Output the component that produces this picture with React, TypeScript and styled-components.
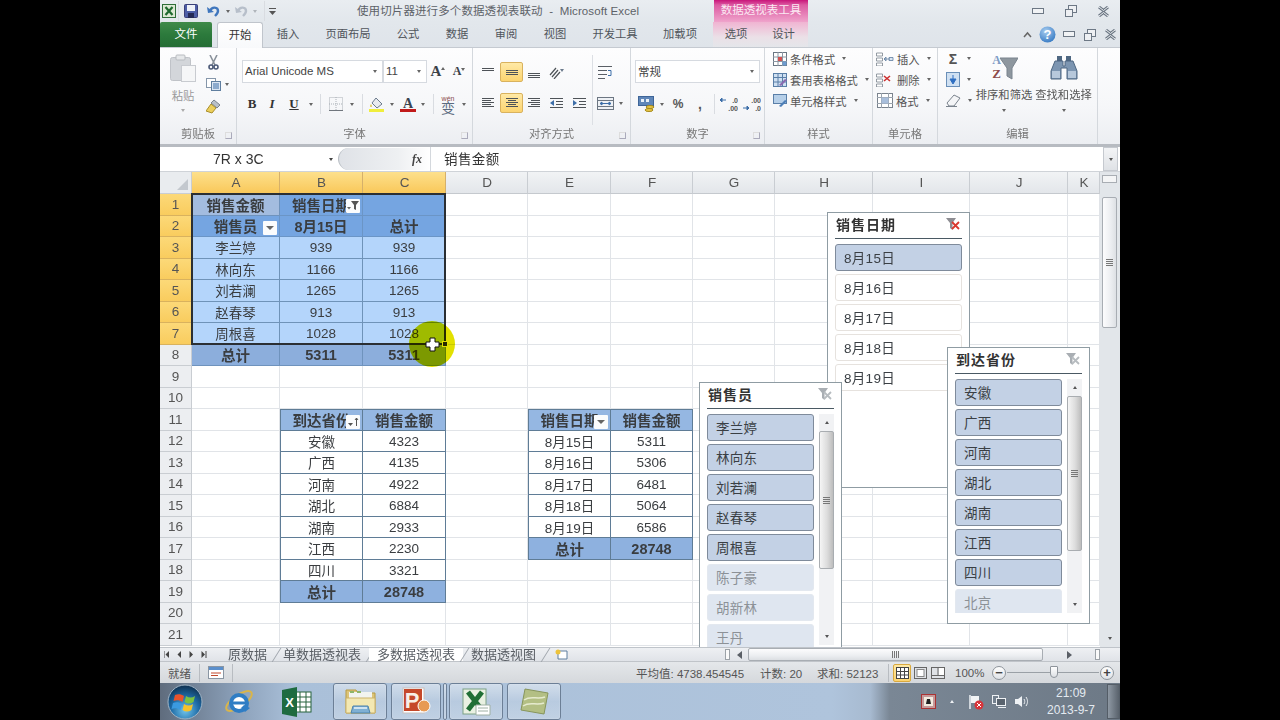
import type { ReactNode } from 'react';
import { createGlobalStyle, styled } from 'styled-components';

const SANS = `"Liberation Sans", "Noto Sans CJK SC", sans-serif`;
const TEMPLATE = '32px 88px 83px 83px 82px 83px 82px 82px 98px 97px 98px 32px';

const GlobalStyle = createGlobalStyle`
  html, body { margin: 0; padding: 0; background: #000; }
  body { font-family: ${SANS}; }
  * { box-sizing: border-box; }
`;

const Screen = styled.div`
  width: 1280px;
  height: 720px;
  background: #000;
  display: flex;
  justify-content: center;
  overflow: hidden;
`;
const Win = styled.div`
  width: 960px;
  height: 720px;
  display: flex;
  flex-direction: column;
  color: #444;
  font-size: 11.3px;
  filter: blur(0.25px);
`;

/* title bar */
const TitleBar = styled.div`
  height: 22px;
  display: flex;
  align-items: center;
  background: linear-gradient(#e9edf1, #e2e7ec);
`;
const Qat = styled.div`
  width: 197px;
  display: flex;
  align-items: center;
`;
const Slot = styled.span<{ $w: number }>`
  width: ${(p) => p.$w}px;
  flex: none;
  display: flex;
  align-items: center;
  justify-content: center;
`;
const TitleText = styled.div`
  width: 357px;
  font-size: 11.5px;
  letter-spacing: 0.1px;
  color: #5d6268;
  white-space: nowrap;
  padding-bottom: 2px;
`;
const ToolHeader = styled.div`
  width: 94px;
  height: 22px;
  background: linear-gradient(#c9157a 0, #dc5aa2 5px, #efa3cb 100%);
  color: #fbeaf3;
  text-align: center;
  line-height: 21px;
  font-size: 11.5px;
`;
const Grow = styled.div`
  flex: 1;
`;

/* tabs */
const TabBar = styled.div`
  height: 26px;
  display: flex;
  align-items: flex-end;
  background: linear-gradient(#e2e7ec, #dfe4ea);
  border-bottom: 1px solid #c5cad1;
`;
const FileTab = styled.div`
  width: 52px;
  height: 25px;
  margin-right: 5px;
  background: linear-gradient(#3f8a49, #2c7a3c 50%, #256d35);
  color: #fff;
  font-size: 11.5px;
  line-height: 24px;
  text-align: center;
  border-radius: 2px 2px 0 0;
`;
const Tab = styled.div<{ $w: number; $active?: boolean }>`
  width: ${(p) => p.$w}px;
  height: ${(p) => (p.$active ? 26 : 25)}px;
  line-height: 24px;
  text-align: center;
  flex: none;
  color: #50555b;
  ${(p) =>
    p.$active &&
    `background: linear-gradient(#fff, #f8f9fb); border: 1px solid #c0c5cc; border-bottom: 0; border-radius: 3px 3px 0 0; margin-bottom: -1px; color: #333;`}
`;
const ToolTabs = styled.div`
  display: flex;
  width: 95px;
  margin-left: 4px;
  height: 25px;
  background: linear-gradient(#f0b4d2, #ebe0e7 60%, #e4e6ea);
`;

/* ribbon */
const Ribbon = styled.div`
  height: 96px;
  display: flex;
  background: linear-gradient(#fdfdfe, #f6f7f9 60%, #eceef2);
`;
const Group = styled.div<{ $w: number }>`
  width: ${(p) => p.$w}px;
  flex: none;
  display: flex;
  flex-direction: column;
  border-right: 1px solid #d4d8dd;
`;
const GroupBody = styled.div`
  height: 79px;
  display: flex;
`;
const GroupFoot = styled.div`
  height: 16px;
  position: relative;
  text-align: center;
  line-height: 15px;
  font-size: 11.3px;
  color: #777;
`;
const Launcher = styled.i`
  position: absolute;
  right: 4px;
  top: 5px;
  width: 7px;
  height: 7px;
  border: 1px solid #aab;
  border-top-color: #ddd;
  border-left-color: #ddd;
`;
const Col = styled.div<{ $pad?: number; $gap?: number; $w?: number }>`
  display: flex;
  flex-direction: column;
  padding-top: ${(p) => p.$pad ?? 0}px;
  gap: ${(p) => p.$gap ?? 0}px;
  ${(p) => p.$w && `width: ${p.$w}px;`}
`;
const Row = styled.div<{ $left?: number; $h?: number }>`
  display: flex;
  align-items: center;
  padding-left: ${(p) => p.$left ?? 0}px;
  height: ${(p) => p.$h ?? 23}px;
`;
const Combo = styled.div<{ $w: number }>`
  width: ${(p) => p.$w}px;
  height: 23px;
  background: #fff;
  border: 1px solid #d6dae0;
  display: flex;
  align-items: center;
  justify-content: space-between;
  padding: 0 5px 1px 2px;
  color: #444;
  font-size: 11.5px;
`;
const Caret = styled.i<{ $c?: string }>`
  display: inline-block;
  width: 0;
  height: 0;
  border-left: 2.5px solid transparent;
  border-right: 2.5px solid transparent;
  border-top: 3px solid ${(p) => p.$c ?? '#666'};
  flex: none;
`;
const CaretUp = styled(Caret)`
  transform: rotate(180deg);
`;
const VSep = styled.i`
  width: 1px;
  height: 20px;
  background: #d9dce1;
`;
const TallSep = styled.div`
  width: 1px;
  height: 70px;
  margin-top: 7px;
  background: #dcdfe4;
`;
const ActiveSlot = styled(Slot)`
  height: 20px;
  background: linear-gradient(#ffe9a6, #fcd470);
  border: 1px solid #d9b25e;
  border-radius: 2px;
`;
const BoldLetter = styled.span<{ $italic?: boolean; $under?: boolean }>`
  font-family: 'Liberation Serif', serif;
  font-weight: bold;
  font-size: 13px;
  color: #333;
  font-style: ${(p) => (p.$italic ? 'italic' : 'normal')};
  text-decoration: ${(p) => (p.$under ? 'underline' : 'none')};
`;
const SizeLetter = styled.span<{ $s: number }>`
  font-family: 'Liberation Serif', serif;
  font-weight: bold;
  font-size: ${(p) => p.$s}px;
  color: #3a4048;
`;
const SizeCaret = styled.span`
  align-self: flex-start;
  margin-top: 4px;
  display: flex;
`;
const WenStack = styled.span`
  display: flex;
  flex-direction: column;
  align-items: center;
  line-height: 8px;
  font-size: 7px;
  color: #8a4a4a;
  & b {
    font-size: 14px;
    line-height: 11px;
    color: #5b6b80;
    font-weight: normal;
  }
`;
const PasteLabel = styled.div`
  margin-top: 7px;
  text-align: center;
  color: #9a9a9a;
  line-height: 14px;
`;
const PasteCaret = styled.div`
  margin-top: 6px;
  display: flex;
`;
const CenterCol = styled.div<{ $w: number; $pad?: number }>`
  width: ${(p) => p.$w}px;
  flex: none;
  display: flex;
  flex-direction: column;
  align-items: center;
  padding-top: ${(p) => p.$pad ?? 0}px;
`;
const BigLabel = styled.div`
  margin-top: 8px;
  white-space: nowrap;
  line-height: 14px;
  margin-bottom: 7px;
  color: #555;
`;
const StyleRow = styled.div<{ $left: number }>`
  height: 21px;
  display: flex;
  align-items: center;
  gap: 3px;
  padding-left: ${(p) => p.$left}px;
  color: #555;
  white-space: nowrap;
  & > i:last-child {
    margin-left: 4px;
  }
`;
const NumSign = styled.span<{ $s?: number }>`
  font-size: ${(p) => p.$s ?? 12}px;
  color: #555;
  font-weight: bold;
`;

/* formula bar */
const FormulaBar = styled.div`
  height: 28px;
  display: flex;
  align-items: stretch;
  background: #fff;
  border-top: 3px solid #b7bbc1;
  border-bottom: 1px solid #cfd3d8;
`;
const NameBox = styled.div`
  width: 178px;
  display: flex;
  align-items: center;
  justify-content: space-between;
  padding: 0 5px 0 53px;
  font-size: 14px;
  color: #333;
`;
const FxPill = styled.div`
  width: 92px;
  margin: 1px 0;
  display: flex;
  align-items: center;
  justify-content: flex-end;
  padding-right: 8px;
  border-radius: 11px 0 0 11px;
  border-left: 1px solid #b9bec4;
  background: linear-gradient(90deg, #dfe2e7, #eef0f2 65%, #fff);
  font-family: 'Liberation Serif', serif;
  font-style: italic;
  font-weight: bold;
  font-size: 12px;
  color: #444;
`;
const FormulaInput = styled.div`
  flex: 1;
  border-left: 1px solid #d4d8dd;
  padding: 0 0 3px 13px;
  display: flex;
  align-items: center;
  font-size: 13.5px;
  letter-spacing: 0.4px;
  color: #333;
`;
const ExpandBtn = styled.div`
  width: 15px;
  margin-right: 2px;
  background: linear-gradient(#f3f4f6, #dfe2e6);
  border: 1px solid #c5c9cf;
  display: flex;
  align-items: center;
  justify-content: center;
`;

/* sheet */
const SheetArea = styled.div`
  height: 475px;
  display: flex;
`;
const GridWrap = styled.div`
  width: 940px;
  height: 475px;
  position: relative;
  overflow: hidden;
  background: #fff;
`;
const Grid = styled.div`
  display: grid;
  grid-template-columns: ${TEMPLATE};
  grid-template-rows: 22px repeat(21, 21.5px);
`;
const Corner = styled.div`
  background: #e9ecef;
  border-right: 1px solid #c9cdd2;
  border-bottom: 1px solid #c9cdd2;
  position: relative;
  &::after {
    content: '';
    position: absolute;
    right: 3px;
    bottom: 3px;
    border-left: 11px solid transparent;
    border-bottom: 11px solid #c3c8ce;
  }
`;
const ColHead = styled.div<{ $on: boolean }>`
  display: flex;
  align-items: center;
  justify-content: center;
  font-size: 13.5px;
  color: #555;
  padding-left: 1px;
  background: ${(p) =>
    p.$on ? 'linear-gradient(#fde08c, #f9c85a)' : 'linear-gradient(#f1f3f5, #e3e6ea)'};
  border-right: 1px solid ${(p) => (p.$on ? '#d5b06a' : '#c9cdd2')};
  border-bottom: 1px solid #c5c9ce;
`;
const RowHead = styled.div<{ $on: boolean }>`
  display: flex;
  align-items: center;
  justify-content: center;
  font-size: 13.5px;
  color: #555;
  background: ${(p) => (p.$on ? 'linear-gradient(#fcd978, #f9cc5e)' : '#eceef1')};
  border-right: 1px solid ${(p) => (p.$on ? '#c9a04a' : '#c9cdd2')};
  border-bottom: 1px solid ${(p) => (p.$on ? '#d9b25e' : '#c9cdd2')};
`;

type Kind = 'none' | 'corner' | 'head' | 'body' | 'total' | 'head2' | 'body2' | 'total2';

const CELL_STYLE: Record<Kind, string> = {
  none: 'border-right: 1px solid #e1e4e8; border-bottom: 1px solid #e1e4e8;',
  corner: 'background: #a3bcdf; border-right: 1px solid #6f93bd; border-bottom: 1px solid #6f93bd;',
  head: 'background: #75a5e1; border-right: 1px solid #6b95c6; border-bottom: 1px solid #6b95c6;',
  body: 'background: #b4d5fb; border-right: 1px solid #6f93b8; border-bottom: 1px solid #6f93b8;',
  total: 'background: #8caedc; border-right: 1px solid #6f93bd; border-bottom: 1px solid #6f93bd;',
  head2: 'background: #95b7e2; border: 1px solid #5f7c96; border-width: 1px 1px 1px 0;',
  body2: 'background: #fff; border-right: 1px solid #5f7c96; border-bottom: 1px solid #5f7c96;',
  total2: 'background: #8eb1df; border-right: 1px solid #5f7c96; border-bottom: 1px solid #5f7c96;',
};

const Cell = styled.div<{ $kind: Kind; $bold: boolean; $first: boolean; $num: boolean }>`
  ${(p) => CELL_STYLE[p.$kind]}
  ${(p) => p.$first && 'border-left: 1px solid #5f7c96;'}
  position: relative;
  display: flex;
  align-items: center;
  justify-content: center;
  overflow: hidden;
  white-space: nowrap;
  color: #3a3d40;
  padding-top: ${(p) => (p.$num ? 1 : 0)}px;
  font-size: ${(p) => (p.$bold ? 14.5 : 13.5)}px;
  font-weight: ${(p) => (p.$bold ? 'bold' : 'normal')};
`;
const CellButton = styled.span`
  position: absolute;
  right: 2px;
  top: 5px;
  width: 14px;
  height: 14px;
  background: #fbfcfd;
  border-radius: 1px;
  display: flex;
  align-items: center;
  justify-content: center;
`;
const SelectionLayer = styled.div`
  position: absolute;
  inset: 0;
  display: grid;
  grid-template-columns: ${TEMPLATE};
  grid-template-rows: 22px repeat(21, 21.5px);
  pointer-events: none;
`;
const SelectionFrame = styled.div`
  grid-column: 2 / 5;
  grid-row: 2 / 9;
  border: 2px solid #2b2f33;
  margin: -1px 0 0 -1px;
  position: relative;
`;
const FillHandle = styled.i`
  position: absolute;
  right: -4px;
  bottom: -4px;
  width: 6px;
  height: 6px;
  background: #2b2f33;
  border: 1px solid #fff;
`;
const Spotlight = styled.div`
  position: absolute;
  left: 249px;
  top: 149px;
  width: 46px;
  height: 46px;
  border-radius: 50%;
  background: #e2e000;
  mix-blend-mode: multiply;
`;
const CursorMark = styled.div`
  position: absolute;
  left: 265px;
  top: 165px;
`;

/* slicer */
const Slicer = styled.div<{ $x: number; $y: number; $h: number }>`
  position: absolute;
  left: ${(p) => p.$x}px;
  top: ${(p) => p.$y}px;
  width: 143px;
  height: ${(p) => p.$h}px;
  background: #fff;
  border: 1.5px solid #8f9ca3;
  padding: 0 7px;
  overflow: hidden;
`;
const SlicerTitle = styled.div`
  height: 26px;
  display: flex;
  align-items: center;
  justify-content: space-between;
  border-bottom: 1px solid #4a5963;
  font-size: 14px;
  font-weight: bold;
  letter-spacing: 1px;
  color: #333;
  padding: 0 2px 3px 1px;
`;
const SlicerBody = styled.div`
  margin-top: 5px;
  display: flex;
  gap: 5px;
`;
const SlicerList = styled.div<{ $h: number }>`
  flex: 1;
  height: ${(p) => p.$h}px;
  overflow: hidden;
  display: flex;
  flex-direction: column;
  gap: 3px;
`;
type ItemState = 'on' | 'off' | 'empty';
const SlicerItem = styled.div<{ $state: ItemState }>`
  height: 27px;
  flex: none;
  display: flex;
  align-items: center;
  padding: 0 0 2px 8px;
  border-radius: 3px;
  font-size: 13.5px;
  letter-spacing: 0.3px;
  color: ${(p) => (p.$state === 'empty' ? '#8c9197' : '#3a3f44')};
  background: ${(p) => (p.$state === 'on' ? '#c3d1e5' : p.$state === 'off' ? '#fff' : '#dfe6f0')};
  border: 1px solid
    ${(p) => (p.$state === 'on' ? '#7f8b9b' : p.$state === 'off' ? '#e6e2de' : '#e3e8ef')};
`;
const SlicerScroll = styled.div<{ $h: number }>`
  width: 15px;
  height: ${(p) => p.$h}px;
  flex: none;
  background: #f1f2f4;
  display: flex;
  flex-direction: column;
  align-items: center;
`;
const ArrowBox = styled.div`
  height: 17px;
  width: 100%;
  flex: none;
  display: flex;
  align-items: center;
  justify-content: center;
`;
const SlicerThumb = styled.div<{ $h: number }>`
  width: 15px;
  height: ${(p) => p.$h}px;
  flex: none;
  background: linear-gradient(90deg, #f5f5f5, #dcdcdc 55%, #bdbdbd);
  border: 1px solid #a9adb1;
  border-radius: 2px;
  display: flex;
  align-items: center;
  justify-content: center;
`;
const Grip = styled.i<{ $vertical?: boolean }>`
  display: block;
  width: 7px;
  height: 7px;
  background: ${(p) =>
    p.$vertical
      ? 'repeating-linear-gradient(90deg, #777 0 1px, transparent 1px 2px)'
      : 'repeating-linear-gradient(#777 0 1px, transparent 1px 2px)'};
`;

/* vertical scrollbar */
const VScroll = styled.div`
  width: 20px;
  background: #e2e6ea;
  padding: 0 3px 0 2px;
  display: flex;
  flex-direction: column;
  align-items: center;
`;
const SplitBox = styled.div`
  width: 100%;
  height: 8px;
  margin-top: 3px;
  border: 1px solid #a8adb3;
  background: #f4f5f6;
`;
const VThumb = styled.div`
  width: 100%;
  height: 131px;
  margin-top: 14px;
  background: linear-gradient(90deg, #fcfcfd, #eceef1 60%, #dde0e4);
  border: 1px solid #a8adb3;
  border-radius: 2px;
  display: flex;
  align-items: center;
  justify-content: center;
`;

/* sheet tabs */
const TabRow = styled.div`
  height: 14px;
  display: flex;
  align-items: stretch;
  background: linear-gradient(#eef0f3, #e0e3e8);
  border-top: 1px solid #bfc4ca;
`;
const TabNav = styled.div`
  width: 60px;
  display: flex;
  align-items: center;
  justify-content: space-between;
  padding: 0 13px 0 4px;
`;
const SheetTab = styled.div<{ $active?: boolean }>`
  position: relative;
  padding: 0 8px;
  font-size: 13px;
  line-height: 13px;
  white-space: nowrap;
  color: #595e64;
  background: ${(p) => (p.$active ? '#fff' : 'transparent')};
  &::after {
    content: '';
    position: absolute;
    right: -2px;
    top: 0;
    width: 1px;
    height: 14px;
    background: #9ea4ab;
    transform: skewX(-32deg);
  }
`;
const NewSheet = styled.div`
  width: 26px;
  margin-left: 5px;
  display: flex;
  align-items: center;
  justify-content: center;
`;
const Splitter = styled.i`
  width: 5px;
  height: 11px;
  flex: none;
  border: 1px solid #9ca2a8;
  background: #fafafa;
  margin: 1px 0;
`;
const HThumb = styled.div`
  width: 295px;
  background: linear-gradient(#fcfcfd, #eceef1 60%, #dcdfe3);
  border: 1px solid #a8adb3;
  border-radius: 2px;
  display: flex;
  align-items: center;
  justify-content: center;
`;
const TriLeft = styled.i`
  border-top: 4px solid transparent;
  border-bottom: 4px solid transparent;
  border-right: 5px solid #5a5f66;
`;
const TriRight = styled.i`
  border-top: 4px solid transparent;
  border-bottom: 4px solid transparent;
  border-left: 5px solid #5a5f66;
`;

/* status bar */
const StatusBar = styled.div`
  height: 22px;
  display: flex;
  align-items: center;
  background: linear-gradient(#e4e7ea, #d5d8dc);
  border-top: 1px solid #c0c4c9;
  font-size: 11.5px;
  color: #555;
  white-space: nowrap;
`;
const StatusItem = styled.span<{ $w: number }>`
  width: ${(p) => p.$w}px;
  flex: none;
`;
const StatusSep = styled.i`
  width: 1px;
  height: 18px;
  flex: none;
  background: #b8bcc1;
`;
const ViewBtn = styled.span<{ $on?: boolean }>`
  width: 18px;
  height: 18px;
  flex: none;
  display: flex;
  align-items: center;
  justify-content: center;
  ${(p) =>
    p.$on &&
    'background: linear-gradient(#ffe9a6, #fcd470); border: 1px solid #d9a93e; border-radius: 2px;'}
`;
const ZoomBtn = styled.span`
  width: 14px;
  height: 14px;
  flex: none;
  border-radius: 50%;
  border: 1px solid #8e949b;
  background: linear-gradient(#fff, #dfe2e6);
  display: flex;
  align-items: center;
  justify-content: center;
  font-size: 13px;
  line-height: 12px;
  font-weight: bold;
  color: #444;
`;
const ZoomTrack = styled.div`
  width: 92px;
  height: 1px;
  margin: 0 1px;
  background: #9aa0a6;
  position: relative;
`;
const ZoomThumb = styled.i`
  position: absolute;
  left: 43px;
  top: -6px;
  width: 8px;
  height: 12px;
  background: linear-gradient(#fff, #dde0e4);
  border: 1px solid #8e949b;
  border-radius: 1px 1px 4px 4px;
`;

/* taskbar */
const Taskbar = styled.div`
  flex: 1;
  display: flex;
  align-items: center;
  background: linear-gradient(
    90deg,
    #5f6c7d 0,
    #8ba0b9 8%,
    #aac0d9 14%,
    #afc4dc 70%,
    #a7bad0 74%,
    #7a8795 76%,
    #6d7986 100%
  );
`;
const TaskSlot = styled.div<{ $w: number; $glass?: boolean }>`
  width: ${(p) => p.$w}px;
  height: 37px;
  flex: none;
  display: flex;
  align-items: center;
  justify-content: center;
  ${(p) =>
    p.$glass &&
    `border: 1px solid #6c7f96; border-radius: 3px; background: linear-gradient(rgba(255,255,255,.45), rgba(255,255,255,.15) 50%, rgba(255,255,255,.25)); box-shadow: inset 0 0 1px #fff;`}
`;
const TrayIcons = styled.div`
  display: flex;
  align-items: center;
  width: 129px;
`;
const Clock = styled.div`
  width: 52px;
  flex: none;
  text-align: center;
  color: #e4eaf0;
  font-size: 12px;
  line-height: 17px;
  white-space: nowrap;
`;
const ShowDesktop = styled.div`
  width: 13px;
  height: 35px;
  flex: none;
  border: 1px solid #545d67;
  background: linear-gradient(90deg, #8e98a3, #59626c);
`;

const Svg = ({ w, h, vb, children }: { w: number; h: number; vb?: string; children: ReactNode }) => (
  <svg width={w} height={h} viewBox={vb ?? `0 0 ${w} ${h}`} style={{ display: 'block', flex: 'none' }}>
    {children}
  </svg>
);

const Lines = ({ rows }: { rows: [number, number, number][] }) => (
  <Svg w={16} h={14}>
    {rows.map(([a, b, y]) => (
      <line key={`${a}-${y}`} x1={a} x2={b} y1={y + 0.5} y2={y + 0.5} stroke="#4e5358" />
    ))}
  </Svg>
);

const WinMin = () => (
  <Svg w={12} h={7}>
    <rect x={0.5} y={0.5} width={11} height={5} fill="#f1f3f5" stroke="#6d7885" />
  </Svg>
);
const WinRestore = () => (
  <Svg w={12} h={12}>
    <rect x={3.5} y={0.5} width={8} height={7} fill="#eef0f3" stroke="#6d7885" />
    <rect x={0.5} y={4.5} width={7} height={7} fill="#eef0f3" stroke="#6d7885" />
  </Svg>
);
const WinClose = () => (
  <Svg w={13} h={11}>
    <path d="M2 1l4.500 3.500L11 1M2 10l4.500-3.500L11 10" fill="none" stroke="#6d7885" strokeWidth={3} />
    <path d="M2 1l4.500 3.500L11 1M2 10l4.500-3.500L11 10" fill="none" stroke="#eef0f3" strokeWidth={1} />
  </Svg>
);
const ExcelMini = () => (
  <Svg w={14} h={14}>
    <rect x={0.5} y={0.5} width={13} height={13} fill="#dce9d4" stroke="#2e6e38" />
    <path d="M3.500 3l7 8M10.500 3l-7 8" stroke="#1f6a2e" strokeWidth={2.2} />
  </Svg>
);
const SaveIcon = () => (
  <Svg w={14} h={14}>
    <rect x={0.5} y={0.5} width={13} height={13} rx={1} fill="#4d5ea6" stroke="#3a3f78" />
    <rect x={3} y={1} width={8} height={6} fill="#eef1f8" />
    <rect x={4} y={9} width={6} height={5} fill="#252a55" />
  </Svg>
);
const UndoIcon = ({ c }: { c: string }) => (
  <Svg w={13} h={12}>
    <path d="M3 6C5 1 11 2 11 6c0 2-1 3-3 5" fill="none" stroke={c} strokeWidth={2.4} />
    <path d="M0 2l1 6 6-1z" fill={c} />
  </Svg>
);
const QatMenu = () => (
  <Svg w={7} h={8}>
    <rect y={1} width={7} height={1} fill="#555" />
    <path d="M0 4h7L3.500 8z" fill="#555" />
  </Svg>
);
const HelpIcon = () => (
  <Svg w={17} h={17}>
    <defs>
      <radialGradient id="help" cx="40%" cy="30%" r="80%">
        <stop offset="0" stopColor="#a8cdf0" />
        <stop offset="1" stopColor="#2f74c0" />
      </radialGradient>
    </defs>
    <circle cx={8.5} cy={8.5} r={8} fill="url(#help)" />
    <text x={8.5} y={13} textAnchor="middle" fontSize={13} fontWeight="bold" fill="#fff" fontFamily="Liberation Sans">
      ?
    </text>
  </Svg>
);
const ChevronUp = () => (
  <Svg w={9} h={7}>
    <path d="M1 6l3.500-4L8 6" fill="none" stroke="#666" strokeWidth={1.5} />
  </Svg>
);
const PasteIcon = () => (
  <Svg w={26} h={28}>
    <rect x={0.5} y={3.5} width={20} height={23} rx={2} fill="#d3d6da" stroke="#c0c3c8" />
    <rect x={6} y={1} width={9} height={5} rx={1} fill="#e6e8ea" stroke="#b8bbc0" />
    <rect x={11.5} y={11.5} width={14} height={16} fill="#f5f6f7" stroke="#c8cbd0" />
  </Svg>
);
const ScissorsIcon = () => (
  <Svg w={11} h={15}>
    <path d="M2 0l5 10M9 0L4 10" stroke="#8a929b" strokeWidth={1.6} />
    <circle cx={3} cy={12} r={2} fill="none" stroke="#4c5a78" strokeWidth={1.6} />
    <circle cx={8} cy={12} r={2} fill="none" stroke="#4c5a78" strokeWidth={1.6} />
  </Svg>
);
const CopyIcon = () => (
  <Svg w={15} h={13}>
    <rect x={0.5} y={0.5} width={9} height={9} fill="#fff" stroke="#8596aa" />
    <rect x={5.5} y={3.5} width={9} height={9} fill="#dbe6f3" stroke="#5f7e9f" />
    <path d="M7 6h6M7 8h6M7 10h6" stroke="#3d6ea8" />
  </Svg>
);
const BrushIcon = () => (
  <Svg w={15} h={15}>
    <path d="M8 1l6 5-3 3-6-5z" fill="#b9c0c8" stroke="#79828c" />
    <path d="M5 5l5 4-4 5L0 12z" fill="#eccf5c" stroke="#a98e2a" />
  </Svg>
);
const BorderIcon = () => (
  <Svg w={14} h={14}>
    <rect x={0.5} y={0.5} width={13} height={13} fill="none" stroke="#aab0b7" strokeDasharray="1 1" />
    <path d="M7 0v14M0 7h14" stroke="#aab0b7" strokeDasharray="1 1" />
    <path d="M0 13.500h14" stroke="#70767d" />
  </Svg>
);
const BucketIcon = () => (
  <Svg w={16} h={15}>
    <path d="M7 1l6 6-5 4-5-5z" fill="#e8ebef" stroke="#6b7a8c" />
    <path d="M2 7c-1 2-1 3 0 3 1 0 1-1 0-3" fill="#d9bc1e" />
    <rect y={12} width={15} height={3} fill="#f0ee3c" />
  </Svg>
);
const FontColorIcon = () => (
  <Svg w={16} h={15}>
    <text x={8} y={11} textAnchor="middle" fontFamily="Liberation Serif" fontWeight="bold" fontSize={14} fill="#3b4350">
      A
    </text>
    <rect y={12} width={16} height={3} fill="#c11a1a" />
  </Svg>
);
const OrientIcon = () => (
  <Svg w={15} h={13}>
    <path d="M1 9l6-7M3 11l6-7M5 13l6-7" stroke="#4e5358" strokeWidth={1.2} />
    <path d="M11 3l4 0-2 3z" fill="#6b7a8c" />
  </Svg>
);
const IndentIcon = ({ out }: { out?: boolean }) => (
  <Svg w={15} h={13}>
    <path d="M1 1.500h13M7 4.500h7M7 7.500h7M1 10.500h13" stroke="#4e5358" />
    <path d={out ? 'M5 3v6L1 6z' : 'M1 3v6l4-3z'} fill="#3d6ea8" />
  </Svg>
);
const WrapIcon = () => (
  <Svg w={16} h={15}>
    <path d="M1 1.500h14M1 5.500h9M1 9.500h9M1 13.500h7" stroke="#5a5f66" />
    <path d="M11 5.500h3v5h-3" fill="none" stroke="#3d6ea8" />
  </Svg>
);
const MergeIcon = () => (
  <Svg w={17} h={13}>
    <rect x={0.5} y={0.5} width={16} height={12} fill="#eef1f5" stroke="#6c7682" />
    <path d="M0 3.500h16M0 9.500h16" stroke="#6c7682" />
    <path d="M3 6.500h11M3 6.500l2-1.500v3zM14 6.500l-2-1.500v3z" stroke="#3d6ea8" fill="#3d6ea8" />
  </Svg>
);
const CurrencyIcon = () => (
  <Svg w={17} h={16}>
    <rect x={0.5} y={0.5} width={15} height={9} fill="#5f86b8" stroke="#3e6598" />
    <rect x={3} y={3} width={3} height={3} fill="#e8f0f8" />
    <rect x={8} y={3} width={3} height={3} fill="#e8f0f8" />
    <ellipse cx={12} cy={11} rx={4} ry={1.5} fill="#e9c748" stroke="#a68a1c" />
    <ellipse cx={11} cy={14} rx={4} ry={1.5} fill="#e9c748" stroke="#a68a1c" />
  </Svg>
);
const DecIcon = ({ more }: { more?: boolean }) => (
  <Svg w={18} h={15}>
    <text x={18} y={6} textAnchor="end" fontSize={7} fontWeight="bold" fontFamily="Liberation Sans" fill="#555">
      {more ? '.00' : '.0'}
    </text>
    <text x={18} y={14} textAnchor="end" fontSize={7} fontWeight="bold" fontFamily="Liberation Sans" fill="#555">
      {more ? '.0' : '.00'}
    </text>
    <path d={more ? 'M0 11h6M6 11l-2-2v4z' : 'M6 3H0M0 3l2-2v4z'} stroke="#3d6ea8" fill="#3d6ea8" />
  </Svg>
);
const CondIcon = () => (
  <Svg w={14} h={14}>
    <rect x={0.5} y={0.5} width={13} height={13} fill="#fff" stroke="#6a7683" />
    <path d="M5 0v14M9.500 0v14M0 5h14M0 9.500h14" stroke="#8c97a3" />
    <rect x={5} y={5} width={4} height={4} fill="#d25050" />
    <rect x={9.5} y={9.5} width={4} height={4} fill="#6c9bd0" />
  </Svg>
);
const TableFmtIcon = () => (
  <Svg w={14} h={14}>
    <rect x={0.5} y={0.5} width={13} height={13} fill="#cfe0f2" stroke="#5a7fa8" />
    <path d="M0 4.500h14M0 9h14M5 0v14M9.500 0v14" stroke="#5a7fa8" />
    <path d="M6 12l6-6 2 1-6 6z" fill="#8a6ab0" />
  </Svg>
);
const CellFmtIcon = () => (
  <Svg w={14} h={14}>
    <rect x={0.5} y={0.5} width={13} height={9} fill="#b6cfe8" stroke="#5a7fa8" />
    <path d="M6 12l6-6 2 1-6 6z" fill="#4d7fb8" />
  </Svg>
);
const InsIcon = ({ kind }: { kind: 'ins' | 'del' }) => (
  <Svg w={19} h={14}>
    <path d="M1.500 1h6v3h-6zM1.500 6h6v3h-6zM1.500 11h6v3h-6z" fill="#fff" stroke="#7a838d" strokeWidth={0.8} />
    {kind === 'ins' ? (
      <path d="M9 7h6M9 7l2-2v4zM14 5.500h4v3h-4z" stroke="#5f7e9f" fill="#dbe6f3" strokeWidth={0.8} />
    ) : (
      <path d="M9 3l6 5M15 3L9 8" stroke="#cc3030" strokeWidth={1.6} />
    )}
  </Svg>
);
const CellsFmtIcon = () => (
  <Svg w={16} h={15}>
    <rect x={0.5} y={0.5} width={15} height={14} fill="#fff" stroke="#7a838d" />
    <path d="M0 4.500h16M0 10.500h16M4.500 0v15M11.500 0v15" stroke="#9aa3ad" />
    <rect x={4.5} y={4.5} width={7} height={6} fill="#a8bedb" />
  </Svg>
);
const FillDownIcon = () => (
  <Svg w={14} h={15}>
    <rect x={0.5} y={0.5} width={13} height={14} fill="#cfe0f2" stroke="#6a8fb8" />
    <path d="M7 3v5M4 7h6l-3 5z" stroke="#2f6fc2" fill="#2f6fc2" />
  </Svg>
);
const EraserIcon = () => (
  <Svg w={15} h={13}>
    <path d="M1 9l7-8 6 3-6 8H3z" fill="#f4f5f7" stroke="#7a838d" />
    <path d="M0 12.500h11" stroke="#7a838d" />
  </Svg>
);
const SortIcon = () => (
  <Svg w={28} h={26}>
    <path d="M10 4h18l-6 10v11l-5-3v-8z" fill="#8e979f" stroke="#7b848e" />
    <text x={6.5} y={10} textAnchor="middle" fontFamily="Liberation Serif" fontWeight="bold" fontSize={12} fill="#7f9cc6">
      A
    </text>
    <text x={6.5} y={24} textAnchor="middle" fontFamily="Liberation Serif" fontWeight="bold" fontSize={13} fill="#8c4a4a">
      Z
    </text>
  </Svg>
);
const BinocularIcon = () => (
  <Svg w={28} h={25}>
    <path d="M7 1h5v5H7zM16 1h5v5h-5z" fill="#4e6782" />
    <path d="M5 6h8v5h2V6h8l4 10v8H17V13h-6v11H1v-8z" fill="#7c95b1" stroke="#4e6782" />
    <rect x={2} y={16} width={8} height={7} fill="#b7c8db" />
    <rect x={18} y={16} width={8} height={7} fill="#b7c8db" />
  </Svg>
);
const FilterClearIcon = ({ active }: { active?: boolean }) => (
  <Svg w={14} h={14}>
    <path d="M0 1h10L6.500 6v7L4 11V6z" fill={active ? '#8d8d92' : '#a9aeb3'} />
    <path d="M6 5l7 7M13 5l-7 7" stroke={active ? '#d9382e' : '#b7bcc0'} strokeWidth={1.8} />
  </Svg>
);
const FunnelMark = () => (
  <Svg w={12} h={10}>
    <path d="M4 0h8L9 4v5L7 8V4z" fill="#555" />
    <path d="M0 6h4L2 8.500z" fill="#666" />
  </Svg>
);
const SortMark = () => (
  <Svg w={12} h={10}>
    <path d="M1 6h5L3.500 9z" fill="#555" />
    <path d="M9.500 1v8M8 3l1.500-2L11 3" fill="none" stroke="#555" />
  </Svg>
);
const DropMark = () => (
  <Svg w={8} h={4}>
    <path d="M0 0h8L4 4z" fill="#666" />
  </Svg>
);
const PlusCursor = () => (
  <Svg w={15} h={15}>
    <path d="M5 1h5v4h4v5h-4v4H5v-4H1V5h4z" fill="#fff" stroke="#111" />
  </Svg>
);
const NewSheetIcon = () => (
  <Svg w={14} h={11}>
    <path d="M3 2h9v8H3z" fill="#fff" stroke="#5f7e9f" />
    <circle cx={3} cy={3} r={2.5} fill="#edc33c" />
  </Svg>
);
const NavEnd = ({ dir }: { dir: 'first' | 'prev' | 'next' | 'last' }) => {
  const left = dir === 'first' || dir === 'prev';
  const bar = dir === 'first' ? 'M0 0v7' : dir === 'last' ? 'M5 0v7' : '';
  return (
    <Svg w={6} h={7}>
      <path d={left ? 'M5 0v7L1.500 3.500z' : 'M0.500 0v7L4 3.500z'} fill="#444" />
      {bar && <path d={bar} stroke="#444" />}
    </Svg>
  );
};
const MacroIcon = () => (
  <Svg w={16} h={13}>
    <rect x={0.5} y={0.5} width={15} height={12} fill="#fff" stroke="#8a96a3" />
    <rect x={1} y={1} width={14} height={3} fill="#5a8fcc" />
    <path d="M3 7h10M3 9.500h7" stroke="#c24a2e" />
  </Svg>
);
const NormalView = () => (
  <Svg w={13} h={12}>
    <rect x={0.5} y={0.5} width={12} height={11} fill="#fff" stroke="#444" />
    <path d="M0 4.500h13M0 8h13M4.500 0v12M8.500 0v12" stroke="#444" />
  </Svg>
);
const LayoutView = () => (
  <Svg w={13} h={12}>
    <rect x={0.5} y={0.5} width={12} height={11} fill="#dfe2e6" stroke="#666" />
    <rect x={3} y={2.5} width={7} height={7} fill="#fff" stroke="#888" />
  </Svg>
);
const BreakView = () => (
  <Svg w={14} h={12}>
    <rect x={0.5} y={0.5} width={13} height={11} fill="#dfe2e6" stroke="#666" />
    <path d="M7 0v8M0 8.500h14" stroke="#666" />
    <rect x={8} y={1} width={5} height={7} fill="#fff" />
  </Svg>
);
const WinOrb = () => (
  <Svg w={36} h={36}>
    <defs>
      <radialGradient id="orb" cx="50%" cy="75%" r="75%">
        <stop offset="0" stopColor="#6fc4ec" />
        <stop offset="0.55" stopColor="#1e6aa5" />
        <stop offset="1" stopColor="#0e2f4e" />
      </radialGradient>
    </defs>
    <circle cx={18} cy={18} r={17} fill="url(#orb)" stroke="#9fb4c6" />
    <path d="M8 11c3 -1 6 -1 9 1l-1.500 6c-3 -2 -6 -2 -9 -1z" fill="#e8532c" />
    <path d="M19 12c3 2 6 2 9 0l-1.500 6c-3 2 -6 2 -9 0z" fill="#7cc142" />
    <path d="M6 19c3 -1 6 -1 9 1l-1.500 6c-3 -2 -6 -2 -9 -1z" fill="#3b9ae0" />
    <path d="M17 20c3 2 6 2 9 0l-1.500 6c-3 2 -6 2 -9 0z" fill="#f6c22a" />
  </Svg>
);
const IeIcon = () => (
  <Svg w={32} h={32}>
    <ellipse cx={16} cy={15} rx={15} ry={6} fill="none" stroke="#d9b54a" strokeWidth={2} transform="rotate(-35 16 15)" />
    <circle cx={16} cy={17} r={10} fill="#2f7dc4" />
    <circle cx={16} cy={17} r={6} fill="#fff" />
    <path d="M10 17h12" stroke="#2f7dc4" strokeWidth={3} />
    <path d="M21 19l6 3-5 4-4-4z" fill="#2f7dc4" />
  </Svg>
);
const ExcelTaskIcon = () => (
  <Svg w={30} h={30}>
    <rect x={12} y={5} width={17} height={20} fill="#fff" stroke="#26633c" />
    <path d="M18 5v20M24 5v20M12 10h17M12 15h17M12 20h17" stroke="#26633c" />
    <path d="M0 3l15-3v30L0 27z" fill="#1e6b40" />
    <text x={7.5} y={20} textAnchor="middle" fontFamily="Liberation Sans" fontSize={13} fontWeight="bold" fill="#fff">
      X
    </text>
  </Svg>
);
const FolderIcon = () => (
  <Svg w={31} h={27}>
    <path d="M1 2h10l2 3h17v20H1z" fill="#dcc478" stroke="#b79b45" />
    <rect x={4} y={4} width={23} height={6} fill="#f2f4f0" />
    <path d="M5 4h4M12 4h4" stroke="#8fb56a" strokeWidth={2} />
    <path d="M1 10h29v15H1z" fill="#f3e8b2" stroke="#cdb36a" />
    <path d="M6 25l2-7h15l2 7z" fill="#7fb0d4" stroke="#4c82ad" />
    <path d="M9 19h13v2H9z" fill="#cfe3f0" />
  </Svg>
);
const PptIcon = () => (
  <Svg w={29} h={29}>
    <rect x={1} y={1} width={21} height={25} fill="#fff" stroke="#c9c0bc" />
    <rect x={2} y={2} width={18} height={22} fill="#c5482a" />
    <text x={10} y={21} textAnchor="middle" fontFamily="Liberation Sans" fontSize={22} fontWeight="bold" fill="#f7efe6">
      P
    </text>
    <circle cx={22} cy={19} r={6} fill="#e79a55" stroke="#fff" />
  </Svg>
);
const Excel2010Icon = () => (
  <Svg w={29} h={28}>
    <rect x={1} y={1} width={23} height={25} fill="#e9f1e2" stroke="#7da186" />
    <path d="M6 4l14 18M20 4L6 22" stroke="#206f35" strokeWidth={5} />
    <path d="M14 17h14v10H14z" fill="#fff" stroke="#9fb0a4" />
    <path d="M16 20h10M16 23h10" stroke="#9fb0a4" />
  </Svg>
);
const GreenAppIcon = () => (
  <Svg w={29} h={27}>
    <path d="M5 1l23 4-4 21L1 22z" fill="#b3bf84" stroke="#87955c" />
    <path d="M4 12c7-5 13 0 21 -3M3 18c7-5 13 0 21 -3" fill="none" stroke="#e6ebcf" strokeWidth={1.5} />
  </Svg>
);
const TrayApp = () => (
  <Svg w={15} h={15}>
    <rect x={0.5} y={0.5} width={14} height={14} fill="#c49a9a" stroke="#a33" />
    <rect x={3} y={3} width={9} height={9} fill="#f2ece0" />
    <path d="M6 5h3l1 5H5z" fill="#222" />
  </Svg>
);
const TrayFlag = () => (
  <Svg w={16} h={16}>
    <path d="M2 1v14" stroke="#eef1f4" strokeWidth={1.5} />
    <path d="M3 2h8v7H3z" fill="#f1f3f5" />
    <circle cx={11} cy={11} r={4.5} fill="#d7343a" />
    <path d="M9 9l4 4M13 9l-4 4" stroke="#fff" />
  </Svg>
);
const TrayNet = () => (
  <Svg w={16} h={15}>
    <rect x={1.5} y={1.5} width={6} height={8} fill="none" stroke="#eef1f4" />
    <rect x={5.5} y={4.5} width={9} height={7} fill="#59636e" stroke="#eef1f4" />
    <path d="M7 13.500h8" stroke="#eef1f4" />
  </Svg>
);
const TraySpeaker = () => (
  <Svg w={15} h={13}>
    <path d="M1 4h3l4-3v11L4 9H1z" fill="#eef1f4" />
    <path d="M10 4c1 2 1 3 0 5M12 2c2 3 2 6 0 9" fill="none" stroke="#eef1f4" />
  </Svg>
);

const TITLE = '使用切片器进行多个数据透视表联动\u00a0\u00a0-\u00a0\u00a0Microsoft Excel';
const TABS: [string, number][] = [
  ['插入', 50],
  ['页面布局', 70],
  ['公式', 50],
  ['数据', 48],
  ['审阅', 50],
  ['视图', 48],
  ['开发工具', 72],
  ['加载项', 58],
];

const COLS = ['A', 'B', 'C', 'D', 'E', 'F', 'G', 'H', 'I', 'J', 'K'];
const ROW_NUMS = Array.from({ length: 21 }, (_, i) => i + 1);

type CellData = { text: string; kind: Kind; bold?: boolean; mark?: 'drop' | 'funnel' | 'sort'; first?: boolean };
const CELLS: Record<string, CellData> = {
  A1: { text: '销售金额', kind: 'corner', bold: true },
  B1: { text: '销售日期', kind: 'head', bold: true, mark: 'funnel' },
  C1: { text: '', kind: 'head' },
  A2: { text: '销售员', kind: 'head', bold: true, mark: 'drop' },
  B2: { text: '8月15日', kind: 'head', bold: true },
  C2: { text: '总计', kind: 'head', bold: true },
  A8: { text: '总计', kind: 'total', bold: true },
  B8: { text: '5311', kind: 'total', bold: true },
  C8: { text: '5311', kind: 'total', bold: true },
};
[
  ['李兰婷', '939'],
  ['林向东', '1166'],
  ['刘若澜', '1265'],
  ['赵春琴', '913'],
  ['周根喜', '1028'],
].forEach(([name, value], i) => {
  CELLS[`A${i + 3}`] = { text: name, kind: 'body' };
  CELLS[`B${i + 3}`] = { text: value, kind: 'body' };
  CELLS[`C${i + 3}`] = { text: value, kind: 'body' };
});
const pivot = (c1: string, c2: string, title: string, mark: 'drop' | 'sort', rows: string[][], total: string) => {
  CELLS[`${c1}11`] = { text: title, kind: 'head2', bold: true, mark, first: true };
  CELLS[`${c2}11`] = { text: '销售金额', kind: 'head2', bold: true };
  rows.forEach(([k, v], i) => {
    CELLS[`${c1}${12 + i}`] = { text: k, kind: 'body2', first: true };
    CELLS[`${c2}${12 + i}`] = { text: v, kind: 'body2' };
  });
  const r = 12 + rows.length;
  CELLS[`${c1}${r}`] = { text: '总计', kind: 'total2', bold: true, first: true };
  CELLS[`${c2}${r}`] = { text: total, kind: 'total2', bold: true };
};
pivot(
  'B',
  'C',
  '到达省份',
  'sort',
  [
    ['安徽', '4323'],
    ['广西', '4135'],
    ['河南', '4922'],
    ['湖北', '6884'],
    ['湖南', '2933'],
    ['江西', '2230'],
    ['四川', '3321'],
  ],
  '28748',
);
pivot(
  'E',
  'F',
  '销售日期',
  'drop',
  [
    ['8月15日', '5311'],
    ['8月16日', '5306'],
    ['8月17日', '6481'],
    ['8月18日', '5064'],
    ['8月19日', '6586'],
  ],
  '28748',
);

const Mark = ({ type }: { type: 'drop' | 'funnel' | 'sort' }) => (
  <CellButton>
    {type === 'drop' && <DropMark />}
    {type === 'funnel' && <FunnelMark />}
    {type === 'sort' && <SortMark />}
  </CellButton>
);

const DATES = ['8月15日', '8月16日', '8月17日', '8月18日', '8月19日'];
const SELLERS = ['李兰婷', '林向东', '刘若澜', '赵春琴', '周根喜', '陈子豪', '胡新林', '王丹'];
const PROVINCES = ['安徽', '广西', '河南', '湖北', '湖南', '江西', '四川', '北京'];

const SlicerBar = ({ h, thumb }: { h: number; thumb: number }) => (
  <SlicerScroll $h={h}>
    <ArrowBox>
      <CaretUp $c="#555" />
    </ArrowBox>
    <SlicerThumb $h={thumb}>
      <Grip />
    </SlicerThumb>
    <Grow />
    <ArrowBox>
      <Caret $c="#555" />
    </ArrowBox>
  </SlicerScroll>
);

export default function App() {
  return (
    <Screen>
      <GlobalStyle />
      <Win>
        <TitleBar>
          <Qat>
            <Slot $w={17}>
              <ExcelMini />
            </Slot>
            <Slot $w={3}>
              <VSep />
            </Slot>
            <Slot $w={22}>
              <SaveIcon />
            </Slot>
            <Slot $w={22}>
              <UndoIcon c="#3f76bd" />
            </Slot>
            <Slot $w={8}>
              <Caret />
            </Slot>
            <Slot $w={18}>
              <UndoIcon c="#b7bfca" />
            </Slot>
            <Slot $w={10}>
              <Caret $c="#b0b5bb" />
            </Slot>
            <Slot $w={8}>
              <VSep />
            </Slot>
            <Slot $w={8}>
              <QatMenu />
            </Slot>
          </Qat>
          <TitleText>{TITLE}</TitleText>
          <ToolHeader>数据透视表工具</ToolHeader>
          <Grow />
          <Slot $w={33}>
            <WinMin />
          </Slot>
          <Slot $w={33}>
            <WinRestore />
          </Slot>
          <Slot $w={33}>
            <WinClose />
          </Slot>
        </TitleBar>

        <TabBar>
          <FileTab>文件</FileTab>
          <Tab $w={46} $active>
            开始
          </Tab>
          {TABS.map(([label, w]) => (
            <Tab key={label} $w={w}>
              {label}
            </Tab>
          ))}
          <ToolTabs>
            <Tab $w={46}>选项</Tab>
            <Tab $w={49}>设计</Tab>
          </ToolTabs>
          <Grow />
          <Row $h={25}>
            <Slot $w={20}>
              <ChevronUp />
            </Slot>
            <Slot $w={21}>
              <HelpIcon />
            </Slot>
            <Slot $w={22}>
              <WinMin />
            </Slot>
            <Slot $w={20}>
              <WinRestore />
            </Slot>
            <Slot $w={20}>
              <WinClose />
            </Slot>
          </Row>
        </TabBar>

        <Ribbon>
          <Group $w={77}>
            <GroupBody>
              <CenterCol $w={46} $pad={6}>
                <PasteIcon />
                <PasteLabel>粘贴</PasteLabel>
                <PasteCaret>
                  <Caret $c="#aaa" />
                </PasteCaret>
              </CenterCol>
              <Col $pad={7} $gap={7}>
                <Slot $w={14}>
                  <ScissorsIcon />
                </Slot>
                <Row $h={15}>
                  <Slot $w={15}>
                    <CopyIcon />
                  </Slot>
                  <Slot $w={12}>
                    <Caret />
                  </Slot>
                </Row>
                <Slot $w={15}>
                  <BrushIcon />
                </Slot>
              </Col>
            </GroupBody>
            <GroupFoot>
              剪贴板
              <Launcher />
            </GroupFoot>
          </Group>

          <Group $w={236}>
            <GroupBody>
              <Col $pad={12} $gap={10}>
                <Row $left={5}>
                  <Combo $w={141}>
                    Arial Unicode MS
                    <Caret />
                  </Combo>
                  <Combo $w={44}>
                    11
                    <Caret />
                  </Combo>
                  <Slot $w={22}>
                    <SizeLetter $s={15}>A</SizeLetter>
                    <SizeCaret>
                      <CaretUp />
                    </SizeCaret>
                  </Slot>
                  <Slot $w={20}>
                    <SizeLetter $s={12}>A</SizeLetter>
                    <SizeCaret>
                      <Caret />
                    </SizeCaret>
                  </Slot>
                </Row>
                <Row $left={5} $h={22}>
                  <Slot $w={20}>
                    <BoldLetter>B</BoldLetter>
                  </Slot>
                  <Slot $w={20}>
                    <BoldLetter $italic>I</BoldLetter>
                  </Slot>
                  <Slot $w={24}>
                    <BoldLetter $under>U</BoldLetter>
                  </Slot>
                  <Slot $w={10}>
                    <Caret />
                  </Slot>
                  <Slot $w={8}>
                    <VSep />
                  </Slot>
                  <Slot $w={23}>
                    <BorderIcon />
                  </Slot>
                  <Slot $w={10}>
                    <Caret />
                  </Slot>
                  <Slot $w={10}>
                    <VSep />
                  </Slot>
                  <Slot $w={20}>
                    <BucketIcon />
                  </Slot>
                  <Slot $w={10}>
                    <Caret />
                  </Slot>
                  <Slot $w={21}>
                    <FontColorIcon />
                  </Slot>
                  <Slot $w={10}>
                    <Caret />
                  </Slot>
                  <Slot $w={10}>
                    <VSep />
                  </Slot>
                  <Slot $w={20}>
                    <WenStack>
                      wén
                      <b>变</b>
                    </WenStack>
                  </Slot>
                  <Slot $w={12}>
                    <Caret />
                  </Slot>
                </Row>
              </Col>
            </GroupBody>
            <GroupFoot>
              字体
              <Launcher />
            </GroupFoot>
          </Group>

          <Group $w={158}>
            <GroupBody>
              <Col $pad={14} $gap={11} $w={119}>
                <Row $left={2} $h={20}>
                  <Slot $w={25}>
                    <Lines rows={[[2, 14, 3], [2, 14, 5]]} />
                  </Slot>
                  <ActiveSlot $w={23}>
                    <Lines rows={[[2, 14, 5], [2, 14, 7], [2, 14, 9]]} />
                  </ActiveSlot>
                  <Slot $w={22}>
                    <Lines rows={[[2, 14, 8], [2, 14, 10], [2, 14, 12]]} />
                  </Slot>
                  <Slot $w={23}>
                    <OrientIcon />
                  </Slot>
                </Row>
                <Row $left={2} $h={20}>
                  <Slot $w={25}>
                    <Lines rows={[[2, 14, 2], [2, 11, 4], [2, 14, 6], [2, 11, 8], [2, 14, 10]]} />
                  </Slot>
                  <ActiveSlot $w={23}>
                    <Lines rows={[[2, 14, 2], [4, 12, 4], [2, 14, 6], [4, 12, 8], [2, 14, 10]]} />
                  </ActiveSlot>
                  <Slot $w={22}>
                    <Lines rows={[[2, 14, 2], [5, 14, 4], [2, 14, 6], [5, 14, 8], [2, 14, 10]]} />
                  </Slot>
                  <Slot $w={23}>
                    <IndentIcon out />
                  </Slot>
                  <Slot $w={23}>
                    <IndentIcon />
                  </Slot>
                </Row>
              </Col>
              <TallSep />
              <Col $pad={14} $gap={11}>
                <Row $h={20}>
                  <Slot $w={24}>
                    <WrapIcon />
                  </Slot>
                </Row>
                <Row $h={20}>
                  <Slot $w={24}>
                    <MergeIcon />
                  </Slot>
                  <Slot $w={8}>
                    <Caret />
                  </Slot>
                </Row>
              </Col>
            </GroupBody>
            <GroupFoot>
              对齐方式
              <Launcher />
            </GroupFoot>
          </Group>

          <Group $w={134}>
            <GroupBody>
              <Col $pad={12} $gap={10}>
                <Row $left={4}>
                  <Combo $w={125}>
                    常规
                    <Caret />
                  </Combo>
                </Row>
                <Row $left={4} $h={22}>
                  <Slot $w={22}>
                    <CurrencyIcon />
                  </Slot>
                  <Slot $w={9}>
                    <Caret />
                  </Slot>
                  <Slot $w={24}>
                    <NumSign>%</NumSign>
                  </Slot>
                  <Slot $w={20}>
                    <NumSign $s={14}>,</NumSign>
                  </Slot>
                  <Slot $w={8}>
                    <VSep />
                  </Slot>
                  <Slot $w={22}>
                    <DecIcon />
                  </Slot>
                  <Slot $w={24}>
                    <DecIcon more />
                  </Slot>
                </Row>
              </Col>
            </GroupBody>
            <GroupFoot>
              数字
              <Launcher />
            </GroupFoot>
          </Group>

          <Group $w={108}>
            <GroupBody>
              <Col>
                <StyleRow $left={8}>
                  <CondIcon />
                  条件格式
                  <Caret />
                </StyleRow>
                <StyleRow $left={8}>
                  <TableFmtIcon />
                  套用表格格式
                  <Caret />
                </StyleRow>
                <StyleRow $left={8}>
                  <CellFmtIcon />
                  单元格样式
                  <Caret />
                </StyleRow>
              </Col>
            </GroupBody>
            <GroupFoot>样式</GroupFoot>
          </Group>

          <Group $w={65}>
            <GroupBody>
              <Col>
                <StyleRow $left={2}>
                  <InsIcon kind="ins" />
                  插入
                  <Caret />
                </StyleRow>
                <StyleRow $left={2}>
                  <InsIcon kind="del" />
                  删除
                  <Caret />
                </StyleRow>
                <StyleRow $left={4}>
                  <CellsFmtIcon />
                  格式
                  <Caret />
                </StyleRow>
              </Col>
            </GroupBody>
            <GroupFoot>单元格</GroupFoot>
          </Group>

          <Group $w={160}>
            <GroupBody>
              <Col $w={37}>
                <StyleRow $left={8}>
                  <Slot $w={14}>
                    <NumSign $s={14}>Σ</NumSign>
                  </Slot>
                  <Caret />
                </StyleRow>
                <StyleRow $left={8}>
                  <FillDownIcon />
                  <Caret />
                </StyleRow>
                <StyleRow $left={8}>
                  <EraserIcon />
                  <Caret />
                </StyleRow>
              </Col>
              <CenterCol $w={58} $pad={6}>
                <SortIcon />
                <BigLabel>排序和筛选</BigLabel>
                <Caret />
              </CenterCol>
              <CenterCol $w={61} $pad={7}>
                <BinocularIcon />
                <BigLabel>查找和选择</BigLabel>
                <Caret />
              </CenterCol>
            </GroupBody>
            <GroupFoot>编辑</GroupFoot>
          </Group>
        </Ribbon>

        <FormulaBar>
          <NameBox>
            7R x 3C
            <Caret $c="#444" />
          </NameBox>
          <FxPill>fx</FxPill>
          <FormulaInput>销售金额</FormulaInput>
          <ExpandBtn>
            <Caret $c="#555" />
          </ExpandBtn>
        </FormulaBar>

        <SheetArea>
          <GridWrap>
            <Grid>
              <Corner />
              {COLS.map((c, i) => (
                <ColHead key={c} $on={i < 3}>
                  {c}
                </ColHead>
              ))}
              {ROW_NUMS.map((r) => [
                <RowHead key={`r${r}`} $on={r <= 7}>
                  {r}
                </RowHead>,
                ...COLS.map((c) => {
                  const cell = CELLS[`${c}${r}`];
                  return (
                    <Cell
                      key={`${c}${r}`}
                      $kind={cell?.kind ?? 'none'}
                      $bold={!!cell?.bold}
                      $first={!!cell?.first}
                      $num={/^\d+$/.test(cell?.text ?? '')}>
                      {cell?.text}
                      {cell?.mark && <Mark type={cell.mark} />}
                    </Cell>
                  );
                }),
              ])}
            </Grid>
            <SelectionLayer>
              <SelectionFrame>
                <FillHandle />
              </SelectionFrame>
            </SelectionLayer>
            <Spotlight />
            <CursorMark>
              <PlusCursor />
            </CursorMark>

            <Slicer $x={667} $y={40} $h={276}>
              <SlicerTitle>
                销售日期
                <FilterClearIcon active />
              </SlicerTitle>
              <SlicerBody>
                <SlicerList $h={240}>
                  {DATES.map((d, i) => (
                    <SlicerItem key={d} $state={i === 0 ? 'on' : 'off'}>
                      {d}
                    </SlicerItem>
                  ))}
                </SlicerList>
              </SlicerBody>
            </Slicer>

            <Slicer $x={787} $y={175} $h={277}>
              <SlicerTitle>
                到达省份
                <FilterClearIcon />
              </SlicerTitle>
              <SlicerBody>
                <SlicerList $h={234}>
                  {PROVINCES.map((p, i) => (
                    <SlicerItem key={p} $state={i < 7 ? 'on' : 'empty'}>
                      {p}
                    </SlicerItem>
                  ))}
                </SlicerList>
                <SlicerBar h={234} thumb={155} />
              </SlicerBody>
            </Slicer>

            <Slicer $x={539} $y={210} $h={300}>
              <SlicerTitle>
                销售员
                <FilterClearIcon />
              </SlicerTitle>
              <SlicerBody>
                <SlicerList $h={240}>
                  {SELLERS.map((s, i) => (
                    <SlicerItem key={s} $state={i < 5 ? 'on' : 'empty'}>
                      {s}
                    </SlicerItem>
                  ))}
                </SlicerList>
                <SlicerBar h={231} thumb={138} />
              </SlicerBody>
            </Slicer>
          </GridWrap>
          <VScroll>
            <SplitBox />
            <VThumb>
              <Grip />
            </VThumb>
            <Grow />
            <ArrowBox>
              <Caret $c="#555" />
            </ArrowBox>
          </VScroll>
        </SheetArea>

        <TabRow>
          <TabNav>
            <NavEnd dir="first" />
            <NavEnd dir="prev" />
            <NavEnd dir="next" />
            <NavEnd dir="last" />
          </TabNav>
          <SheetTab>原数据</SheetTab>
          <SheetTab>单数据透视表</SheetTab>
          <SheetTab $active>多数据透视表</SheetTab>
          <SheetTab>数据透视图</SheetTab>
          <NewSheet>
            <NewSheetIcon />
          </NewSheet>
          <Grow />
          <Splitter />
          <Slot $w={18}>
            <TriLeft />
          </Slot>
          <HThumb>
            <Grip $vertical />
          </HThumb>
          <Slot $w={52}>
            <TriRight />
          </Slot>
          <Splitter />
          <Slot $w={20} />
        </TabRow>

        <StatusBar>
          <Slot $w={39}>就绪</Slot>
          <StatusSep />
          <Slot $w={32}>
            <MacroIcon />
          </Slot>
          <StatusSep />
          <StatusItem $w={403} />
          <StatusItem $w={124}>平均值: 4738.454545</StatusItem>
          <StatusItem $w={57}>计数: 20</StatusItem>
          <StatusItem $w={71}>求和: 52123</StatusItem>
          <StatusSep />
          <Slot $w={4} />
          <ViewBtn $on>
            <NormalView />
          </ViewBtn>
          <ViewBtn>
            <LayoutView />
          </ViewBtn>
          <ViewBtn>
            <BreakView />
          </ViewBtn>
          <StatusItem $w={8} />
          <StatusItem $w={37}>100%</StatusItem>
          <ZoomBtn>−</ZoomBtn>
          <ZoomTrack>
            <ZoomThumb />
          </ZoomTrack>
          <ZoomBtn>+</ZoomBtn>
        </StatusBar>

        <Taskbar>
          <TaskSlot $w={50}>
            <WinOrb />
          </TaskSlot>
          <TaskSlot $w={58}>
            <IeIcon />
          </TaskSlot>
          <TaskSlot $w={58}>
            <ExcelTaskIcon />
          </TaskSlot>
          <Slot $w={7} />
          <TaskSlot $w={54} $glass>
            <FolderIcon />
          </TaskSlot>
          <Slot $w={4} />
          <TaskSlot $w={50} $glass>
            <PptIcon />
          </TaskSlot>
          <Slot $w={2} />
          <TaskSlot $w={4} $glass />
          <Slot $w={2} />
          <TaskSlot $w={54} $glass>
            <Excel2010Icon />
          </TaskSlot>
          <Slot $w={4} />
          <TaskSlot $w={54} $glass>
            <GreenAppIcon />
          </TaskSlot>
          <Grow />
          <TrayIcons>
            <Slot $w={24}>
              <TrayApp />
            </Slot>
            <Slot $w={24}>
              <CaretUp $c="#eef1f4" />
            </Slot>
            <Slot $w={24}>
              <TrayFlag />
            </Slot>
            <Slot $w={22}>
              <TrayNet />
            </Slot>
            <Slot $w={22}>
              <TraySpeaker />
            </Slot>
          </TrayIcons>
          <Clock>
            21:09
            <br />
            2013-9-7
          </Clock>
          <Slot $w={10} />
          <ShowDesktop />
        </Taskbar>
      </Win>
    </Screen>
  );
}
